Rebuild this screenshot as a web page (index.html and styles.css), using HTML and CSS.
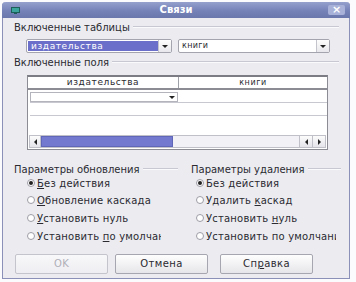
FILE: index.html
```html
<!DOCTYPE html>
<html>
<head>
<meta charset="utf-8">
<link rel="stylesheet" href="styles.css">
</head>
<body>
<div class="window">
  <div class="titlebar">
    <svg class="appicon" width="9" height="7" viewBox="0 0 9 7"><rect x="0.5" y="0.5" width="8" height="5" fill="#3aa49a" stroke="#1e5e5a"/><rect x="3" y="5.5" width="3" height="1.5" fill="#1e5e5a"/></svg>
    <span class="title">Связи</span>
    <span class="close">×</span>
  </div>
  <div class="content">
    <div class="sechead"><span>Включенные таблицы</span><i class="line"></i></div>
    <div class="combos">
      <div class="combo c1"><div class="field sel">издательства</div><div class="btn"><i class="arr"></i></div></div>
      <div class="combo c2"><div class="field">книги</div><div class="btn"><i class="arr"></i></div></div>
    </div>
    <div class="sechead"><span>Включенные поля</span><i class="line"></i></div>
    <div class="table">
      <div class="thead">
        <div class="th">издательства</div>
        <div class="th">книги</div>
      </div>
      <div class="trow">
        <div class="td"><div class="cellcombo"><i class="arr"></i></div></div>
        <div class="td"></div>
      </div>
      <div class="trow">
        <div class="td"></div>
        <div class="td"></div>
      </div>
      <div class="tspace"></div>
      <div class="hscroll">
        <div class="sbtn"><i class="la"></i></div>
        <div class="thumb"></div>
        <div class="track"></div>
        <div class="sbtn r"><i class="la"></i></div>
        <div class="sbtn r"><i class="ra"></i></div>
      </div>
    </div>
    <div class="groups">
      <div class="group gl">
        <div class="sechead"><span>Параметры обновления</span><i class="line"></i></div>
        <div class="radios">
          <div class="radio"><i class="dot on"></i><span><u>Б</u>ез действия</span></div>
          <div class="radio"><i class="dot"></i><span><u>О</u>бновление каскада</span></div>
          <div class="radio"><i class="dot"></i><span><u>У</u>становить нуль</span></div>
          <div class="radio"><i class="dot"></i><span>Установить <u>п</u>о умолчанию</span></div>
        </div>
      </div>
      <div class="group gr">
        <div class="sechead"><span>Параметры удаления</span><i class="line"></i></div>
        <div class="radios">
          <div class="radio"><i class="dot on"></i><span>Без действия</span></div>
          <div class="radio"><i class="dot"></i><span>Удалить <u>к</u>аскад</span></div>
          <div class="radio"><i class="dot"></i><span>Установить <u>н</u>уль</span></div>
          <div class="radio"><i class="dot"></i><span>Установить по умолчанию</span></div>
        </div>
      </div>
    </div>
    <div class="buttons">
      <div class="pbtn disabled">OK</div>
      <div class="pbtn">Отмена</div>
      <div class="pbtn help">Сп<u>р</u>авка</div>
    </div>
  </div>
</div>
</body>
</html>
```
FILE: styles.css
```css
html, body { margin: 0; padding: 0; }
body {
  width: 356px; height: 282px; overflow: hidden;
  background: #fbfbfd;
  font-family: "DejaVu Sans", sans-serif;
  font-size: 10px;
  color: #2a2a30;
}
.window {
  margin: 2px 0 0 2px;
  width: 348px; height: 277px;
  border: 1px solid #8a90b8;
  border-top: none;
  border-radius: 4px 4px 0 0;
  background: #ececf0;
  display: flex; flex-direction: column;
  box-sizing: border-box;
}
.titlebar {
  height: 16px;
  margin: 0 -1px;
  border-radius: 4px 4px 0 0;
  background: linear-gradient(#95a0cc, #7582b8 55%, #6a77ac);
  display: flex; align-items: center;
  position: relative;
  padding: 0 5px 0 9px;
}
.appicon { display: block; }
.title {
  position: absolute; left: 0; right: 0; text-align: center;
  color: #fff; font-weight: bold; font-size: 10px; line-height: 16px;
}
.close {
  margin-left: auto;
  width: 17px; height: 10px;
  border-radius: 2px;
  background: #a8b2d8;
  color: #fff; font-weight: bold; font-size: 11px; line-height: 10px; text-align: center;
  position: relative;
}
.content { padding: 3px 10px 0 11px; display: flex; flex-direction: column; }
.sechead { display: flex; align-items: center; height: 12px; }
.sechead span { white-space: nowrap; padding-right: 3px; }
.sechead .line { flex: 1; height: 1px; background: #c8c8d2; border-bottom: 1px solid #fafafc; }
.combos { display: flex; margin: 6px 0 0 12px; gap: 6px; height: 14px; }
.combo {
  display: flex; border: 1px solid #a4a4ae; background: #fff; box-sizing: border-box;
  border-radius: 2px;
}
.c1 { width: 146px; }
.c2 { width: 152px; }
.field { flex: 1; padding-left: 3px; line-height: 12px; font-size: 8px; letter-spacing: 0.3px; }
.field.sel { background: #6b6fc9; color: #fff; margin: 1px 0 1px 1px; line-height: 10px; font-size: 9px; letter-spacing: 0.6px; }
.btn { width: 12px; border-left: 1px solid #c4c4cc; background: linear-gradient(#fdfdfd, #e8e8ec); display: flex; align-items: center; justify-content: center; }
.arr { width: 0; height: 0; border-left: 3px solid transparent; border-right: 3px solid transparent; border-top: 3px solid #222; }
.combos + .sechead { margin-top: 3px; }
.table {
  margin: 7px 0 0 13px; width: 301px; height: 75px;
  background: #fff; border: 1px solid #8c8c94; border-top: 2px solid #7c7c84;
  box-sizing: border-box; display: flex; flex-direction: column;
}
.thead { display: flex; height: 11px; border-bottom: 2px solid #8c8c94; }
.th { text-align: center; line-height: 11px; font-size: 9px; letter-spacing: 0.6px; }
.th:first-child { width: 150px; border-right: 1px solid #a0a0a8; }
.th:last-child { flex: 1; font-size: 8px; }
.trow { display: flex; height: 12px; border-bottom: 1px solid #c8c8d0; margin-left: 2px; }
.td:first-child { width: 148px; }
.td:last-child { flex: 1; }
.cellcombo { margin-top: 2px; height: 8px; border: 1px solid #b4b4bc; display: flex; justify-content: flex-end; align-items: center; padding-right: 2px; }
.tspace { flex: 1; }
.hscroll { height: 11px; display: flex; margin: 0 1px 1px 1px; border: 1px solid #c0c0c8; }
.sbtn { width: 10px; background: linear-gradient(#fcfcfc, #e4e4ea); display: flex; align-items: center; justify-content: center; border-right: 1px solid #c0c0c8; }
.sbtn.r { width: 12px; border-right: none; border-left: 1px solid #c0c0c8; }
.la { width: 0; height: 0; border-top: 3px solid transparent; border-bottom: 3px solid transparent; border-right: 3px solid #222; }
.ra { width: 0; height: 0; border-top: 3px solid transparent; border-bottom: 3px solid transparent; border-left: 3px solid #222; }
.thumb { width: 132px; background: #7379cf; border: 1px solid #6066b8; box-sizing: border-box; }
.track { flex: 1; background: #f2f2f6; }
.groups { display: grid; grid-template-columns: 164px 150px; column-gap: 13px; margin-top: 13px; }
.radios { display: flex; flex-direction: column; margin-top: 0px; overflow: hidden; }
.gl .radios { margin-left: 13px; width: 134px; }
.gr .radios { margin-left: 5px; width: 140px; }
.radio { height: 18px; display: flex; align-items: center; white-space: nowrap; }
.radio:first-child { height: 16px; }
.dot {
  flex: none; width: 8px; height: 8px; border-radius: 50%;
  border: 1px solid #9c9ca6; background: #fff; box-sizing: border-box; margin-right: 2px;
  display: flex; align-items: center; justify-content: center;
}
.dot.on::after { content: ""; width: 4px; height: 4px; border-radius: 50%; background: #222; }
.radio span { letter-spacing: 0.2px; }
.buttons { display: flex; margin: 9px 0 0 1px; }
.pbtn {
  width: 93px; height: 20px; box-sizing: border-box;
  border: 1px solid #a6a6b0; border-radius: 2px;
  background: linear-gradient(#fefefe, #e6e6ea);
  text-align: center; line-height: 18px; letter-spacing: 0.4px;
}
.pbtn + .pbtn { margin-left: 7px; }
.pbtn.help { margin-left: 12px; }
.pbtn.disabled { color: #b0b0b8; border-color: #c4c4cc; background: linear-gradient(#f8f8fa, #eeeef2); }
u { text-decoration: underline; text-underline-offset: 1px; }
```
